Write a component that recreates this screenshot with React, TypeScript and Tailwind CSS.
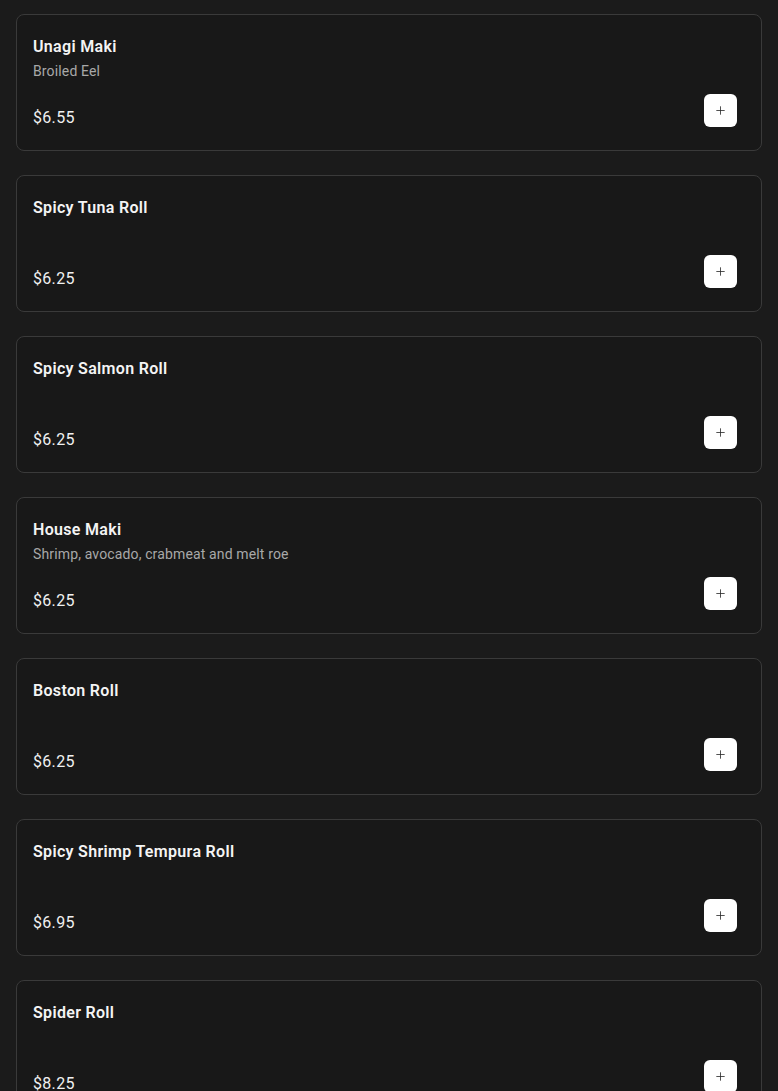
import { Plus } from "lucide-react";

const ITEMS = [
  { name: "Unagi Maki", desc: "Broiled Eel", price: "$6.55" },
  { name: "Spicy Tuna Roll", desc: "", price: "$6.25" },
  { name: "Spicy Salmon Roll", desc: "", price: "$6.25" },
  { name: "House Maki", desc: "Shrimp, avocado, crabmeat and melt roe", price: "$6.25" },
  { name: "Boston Roll", desc: "", price: "$6.25" },
  { name: "Spicy Shrimp Tempura Roll", desc: "", price: "$6.95" },
  { name: "Spider Roll", desc: "", price: "$8.25" },
  { name: "California Roll", desc: "", price: "$5.95" },
];

function MenuCard({ name, desc, price }: { name: string; desc: string; price: string }) {
  return (
    <div className="bg-[#181818] border border-[#3a3a3a] rounded-lg pl-4 pr-6 pt-5 pb-5 tracking-[0.02em]">
      <div className="text-[16px] leading-6 font-semibold text-[#f4f4f4]">{name}</div>
      <div className="text-[14px] leading-5 text-[#a8a8a8] mt-[2px] h-5 tracking-[0.01em]">{desc}</div>
      <div className="flex items-start justify-between mt-[13px]">
        <div className="pt-3 text-[16px] leading-6 text-[#f0f0f0]">{price}</div>
        <button className="w-[33px] h-[33px] rounded-md bg-white flex items-center justify-center text-[#2a2a2a]">
          <Plus size={13} strokeWidth={1.5} />
        </button>
      </div>
    </div>
  );
}

export default function App() {
  return (
    <div
      className="min-h-screen bg-[#1b1b1b] px-4 pt-[14px] pb-6 flex flex-col gap-6"
      style={{ fontFamily: "Roboto, 'Noto Sans', sans-serif" }}
    >
      {ITEMS.map((it) => (
        <MenuCard key={it.name} {...it} />
      ))}
    </div>
  );
}
